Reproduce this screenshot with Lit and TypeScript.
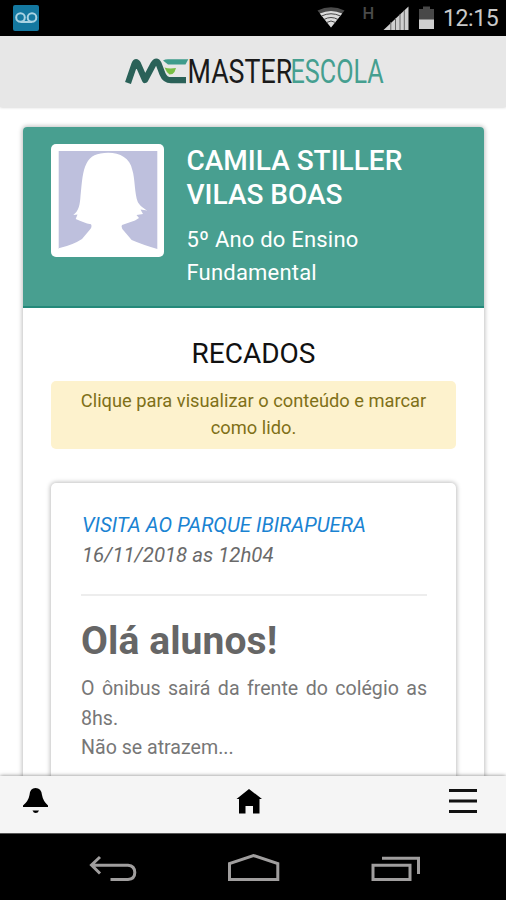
import { LitElement, html, css } from "lit";
import { customElement } from "lit/decorators.js";

@customElement("status-bar")
class StatusBar extends LitElement {
  static styles = css`
    :host { display: flex; align-items: center; height: 36px; background: #000; color: #c9c9c9;
      padding: 0 8px 0 12px; box-sizing: border-box; flex: none; }
    svg { display: block; flex: none; }
    .space { flex: 1; }
    .time { margin-left: 6px; font-size: 23px; line-height: 36px; width: 55px; white-space: nowrap; letter-spacing: -0.4px; padding-top: 2px; }
  `;
  render() {
    return html`
      <svg width="28" height="26" viewBox="0 0 28 26">
        <rect x="1" y="0" width="26" height="26" rx="2" fill="#1478a0"></rect>
        <g fill="none" stroke="#a9d3e3" stroke-width="2">
          <circle cx="8.500" cy="12.500" r="4.300"></circle><circle cx="20" cy="12.500" r="4.300"></circle>
          <path d="M8.500 17H20"></path>
        </g>
      </svg>
      <div class="space"></div>
      <svg width="125" height="36" viewBox="312 0 125 36">
        <path d="M317.500 10.500Q331 4 344.500 10.500L331 27.500Z" fill="#4b4b4b"></path>
        <path d="M319.800 13.500Q331 8.500 342.200 13.500L331 27.500Z" fill="#dcdcdc"></path>
        <g fill="none" stroke="#444" stroke-width="1">
          <path d="M321.500 16Q331 11.500 340.500 16"></path><path d="M324 19.500Q331 15.500 338 19.500"></path>
          <path d="M326.500 22.500Q331 19.500 335.500 22.500"></path>
        </g>
        <text x="362.500" y="19" font-size="16.500" fill="#4a4a4a" font-family="Roboto, sans-serif" font-weight="500">H</text>
        <path d="M383.500 30L408.500 6.500V30Z" fill="#cfcfcf"></path>
        <path d="M390.800 22V30M395.500 18V30M400 14V30M404.300 10V30" stroke="#666" stroke-width="1"></path>
        <path d="M423 6.500H430V9H434V20H419V9H423Z" fill="#484848"></path>
        <rect x="419" y="19.500" width="15" height="9.500" fill="#cfcfcf"></rect>
      </svg>
      <div class="time">12:15</div>
    `;
  }
}

@customElement("brand-header")
class BrandHeader extends LitElement {
  static styles = css`
    :host { display: flex; justify-content: center; height: 71px; flex: none; background: #e7e7e7;
      box-shadow: 0 0 3px rgba(0,0,0,.25); padding: 11px 0 0 4px; box-sizing: border-box; }
    svg { display: block; }
    text { font-family: Roboto, sans-serif; font-size: 32.500px; font-weight: 400; }
    .master { fill: #1a1a1a; }
    .escola { fill: #459f90; }
  `;
  render() {
    return html`
      <svg width="270" height="50" viewBox="0 -8 270 50">
        <path d="M43 5.500Q45 4.300 48 4.300H68.300L65.500 9.500H48Z" fill="#3f9c8c"></path>
        <path d="M8 28L14.500 9Q16 5 18 9L25 25L33.500 9Q36.500 4 38.700 9L42.500 19Q45 25.200 51 25.200H66" fill="none" stroke="#2a6158" stroke-width="6.200" stroke-linejoin="round"></path>
        <path d="M44.500 12.500Q49 14 56 13L54.500 17Q53 19.500 49.500 19.500Q46.500 17.500 44.500 12.500Z" fill="#79be45"></path>
        <text class="master" transform="translate(67.500 28) scale(.825 1)">MASTER</text>
        <text class="escola" transform="translate(170.500 28) scale(.775 1)">ESCOLA</text>
      </svg>
    `;
  }
}

@customElement("student-card")
class StudentCard extends LitElement {
  static styles = css`
    :host { display: flex; gap: 22.500px; height: 181px; box-sizing: border-box; padding: 17px 28px 0;
      background: #489f90; border-bottom: 2px solid #24897a; border-radius: 4px 4px 0 0; color: #fff; }
    svg { display: block; flex: none; }
    .name { font-size: 28px; line-height: 34px; font-weight: 500; }
    .grade { font-size: 22px; line-height: 33.500px; margin-top: 10.500px; letter-spacing: .2px; }
  `;
  render() {
    return html`
      <svg width="113" height="113" viewBox="0 0 113 113">
        <rect width="113" height="113" rx="5" fill="#fff"></rect>
        <rect x="7.700" y="7" width="98.600" height="98" fill="#bec0dd"></rect>
        <path fill="#fff" d="M57.300 8.700C46 8.700 39 12 35.500 19.500C31.500 27 31 38 29.500 52C29 60 28 67 22.300 71L26.500 70.500L24.700 75C29 77 35 79.500 40 80.300C41 82 40.500 84 39 85.500L31 95Q22 101 7.700 104.300V106H106.300V105Q91 100.500 80.700 96L71.300 85Q70 82 71 81L84 76.500L88 74L85.500 71L92 70L89.500 65.500L96.300 66.500C91 63.500 88.500 61 86.700 57.700C83.500 50 84 34 81.300 26C79 14 69 8.700 57.300 8.700Z"></path>
      </svg>
      <div>
        <div class="name">CAMILA STILLER<br>VILAS BOAS</div>
        <div class="grade">5º Ano do Ensino<br>Fundamental</div>
      </div>
    `;
  }
}

@customElement("message-card")
class MessageCard extends LitElement {
  static styles = css`
    :host { display: block; margin: 34px 0 0; height: 400px; border-radius: 5px; background: #fff;
      box-shadow: 0 0 4px 1px rgba(0,0,0,.25); padding: 28px 29px 0 30px; color: #666; box-sizing: border-box; }
    .head { font-style: italic; font-size: 20.400px; line-height: 29.500px; color: #6a6a6a; white-space: nowrap; padding-left: 1px; }
    .title { color: #1a83d2; }
    .rule { height: 2px; background: #ededed; margin: 24px 0 0; }
    .greeting { font-size: 39px; line-height: 46px; font-weight: 700; margin-top: 22px; color: #666; letter-spacing: .1px; }
    .body { font-size: 19.600px; line-height: 29.500px; text-align: justify; margin-top: 10px; color: #777; }
  `;
  render() {
    return html`
      <div class="head"><div class="title">VISITA AO PARQUE IBIRAPUERA</div><div class="date">16/11/2018 as 12h04</div></div>
      <div class="rule"></div>
      <div class="greeting">Olá alunos!</div>
      <div class="body">O ônibus sairá da frente do colégio as 8hs.<br>Não se atrazem...</div>
    `;
  }
}

@customElement("tab-bar")
class TabBar extends LitElement {
  static styles = css`
    :host { display: flex; justify-content: space-between; height: 57px; flex: none; background: #f5f5f5;
      box-shadow: 0 0 4px rgba(0,0,0,.5); padding: 10px 28px 0 22px; box-sizing: border-box; position: relative; }
    svg { display: block; }
  `;
  render() {
    return html`
      <svg width="28" height="30" viewBox="22 786 28 30">
        <path d="M23 807V805.500Q28.500 801 29.500 795Q30 788 35.500 788Q41.300 788 42 795Q43 801 48 805.500V807Z"></path>
        <path d="M32.500 810.500H39Q38 813 35.700 813Q33.500 813 32.500 810.500Z"></path>
      </svg>
      <svg width="28" height="30" viewBox="235.500 786 28 30">
        <path d="M249.500 789L262.500 799H260V813.500H253.500V806H246V813.500H239.500V799H237Z"></path>
      </svg>
      <svg width="30" height="30" viewBox="448 786 30 30">
        <path d="M449 790.500H477M449 801H477M449 811.500H477" stroke="#111" stroke-width="2.800"></path>
      </svg>
    `;
  }
}

@customElement("nav-bar")
class NavBar extends LitElement {
  static styles = css`
    :host { display: flex; justify-content: space-between; height: 67px; flex: none; background: #000;
      padding: 16px 83px 0 87px; box-sizing: border-box; position: relative; border-top: 1px solid #555; }
    svg { display: block; fill: none; stroke: #a09e9e; stroke-width: 3; }
  `;
  render() {
    return html`
      <svg width="52" height="36" viewBox="87 850 52 36">
        <path d="M100 857L91.500 865L100 873.500M92 865.300H128Q134.800 866 134.800 872.500Q134.800 879 128 879.500H110.500"></path>
      </svg>
      <svg width="56" height="36" viewBox="226 850 56 36">
        <path d="M229.500 879.500V863.500L253.500 855.500L277.800 863.500V879.500Z"></path>
      </svg>
      <svg width="54" height="36" viewBox="369 850 54 36">
        <path d="M373 865.300H410V879.500H373ZM382 858.300H418.500V874"></path>
      </svg>
    `;
  }
}

@customElement("app-root")
class AppRoot extends LitElement {
  static styles = css`
    :host { display: flex; flex-direction: column; width: 506px; height: 900px; overflow: hidden;
      background: #fff; font-family: Roboto, sans-serif; }
    .content { flex: 1; min-height: 0; overflow: hidden; padding: 20px 22px 0 23px; }
    .card { height: 800px; border-radius: 4px; background: #fff; box-shadow: 0 0 4px 1px rgba(0,0,0,.25); }
    .inner { padding: 29px 28px 0; }
    .heading { font-size: 28px; line-height: 34px; text-align: center; color: #111; }
    .notice { margin-top: 10px; height: 68px; box-sizing: border-box; padding: 7px 20px 0; border-radius: 5px;
      background: #fdf2cd; color: #7f7018; font-size: 18.300px; line-height: 26.500px; text-align: center; }
  `;
  render() {
    return html`
      <status-bar></status-bar>
      <brand-header></brand-header>
      <main class="content">
        <div class="card">
          <student-card></student-card>
          <div class="inner">
            <div class="heading">RECADOS</div>
            <div class="notice">Clique para visualizar o conteúdo e marcar como lido.</div>
            <message-card></message-card>
          </div>
        </div>
      </main>
      <tab-bar></tab-bar>
      <nav-bar></nav-bar>
    `;
  }
}
